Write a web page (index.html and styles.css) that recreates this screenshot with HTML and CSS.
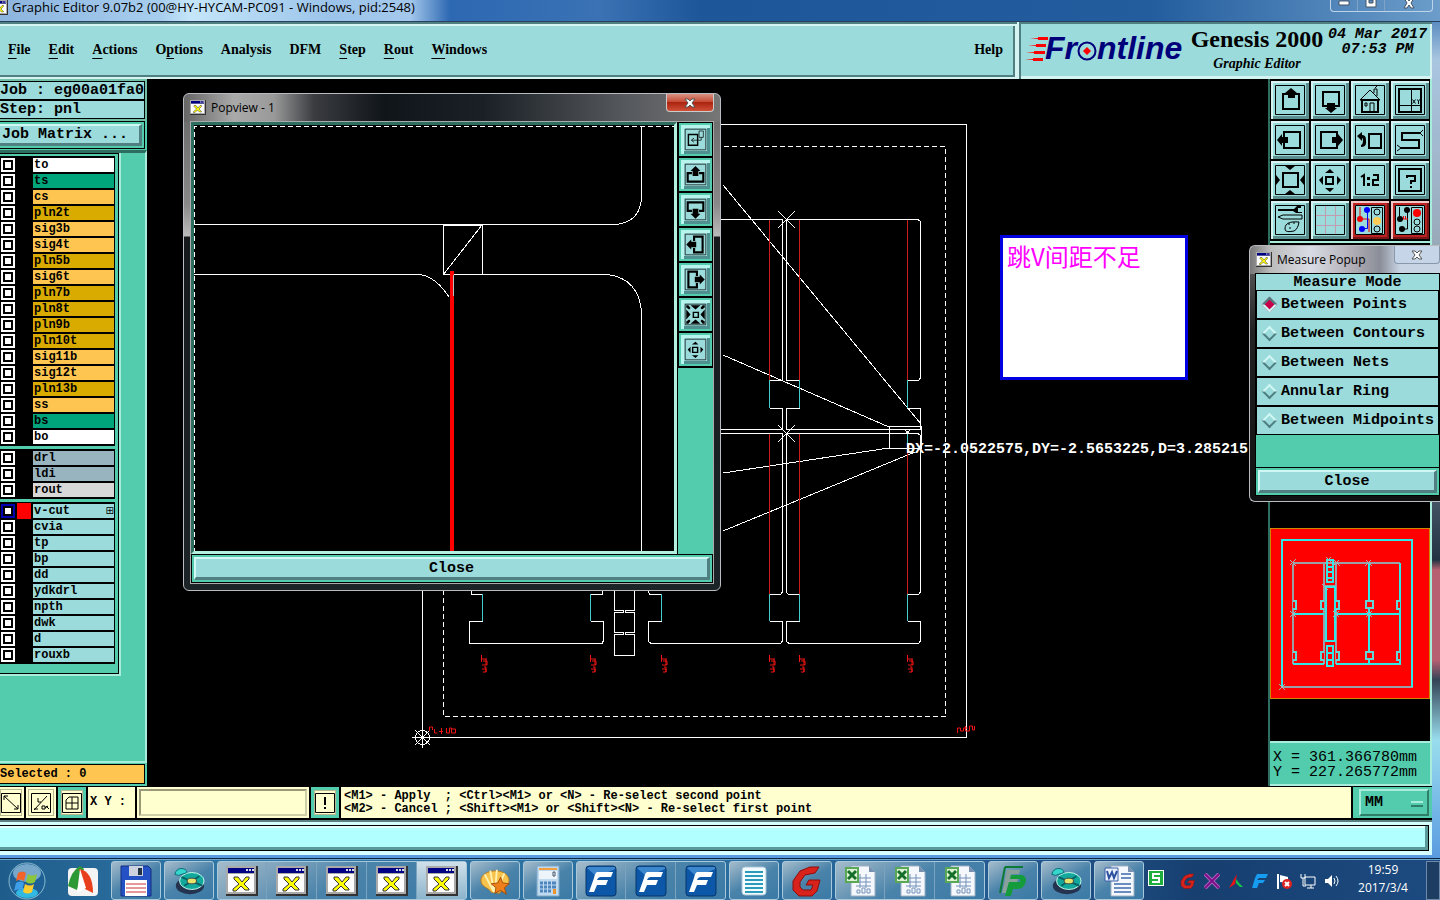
FILE: index.html
```html
<!DOCTYPE html>
<html lang="en">
<head>
    <meta charset="UTF-8">
    <meta name="viewport" content="width=device-width, initial-scale=1.0">
    <title>Graphic Editor 9.07b2</title>
    <link rel="stylesheet" href="styles.css">
</head>
<body>
    <!-- Shared icons -->
    <svg class="defs" width="0" height="0" aria-hidden="true">
        <symbol id="i-win" viewBox="0 0 32 30">
            <path d="M0 0h32v30H0z" fill="#333"/><path d="M0 0h30v28H0z" fill="#aaa"/>
            <path d="M2 2h26v5H2z" fill="#000084"/><path d="M2 8h26v18H2z" fill="#fff"/>
            <path d="M20 3h2v2h-2zM23 3h2v2h-2zM26 3h2v2h-2z" fill="#ddd"/>
            <path d="M8 11h4l4 5 4-5h3v2l-5 5 5 5v1h-4l-4-4-5 5H7v-2l6-5-5-5z" fill="#ff0" stroke="#333"/>
        </symbol>
        <symbol id="i-up" viewBox="0 0 38 38">
            <path class="fr" d="M4.500 4.500h29v29h-29z"/><path class="ln" d="M12 13h16v15H12z"/>
            <path d="M20 7l6 5h-2v5h-7v-5h-3z"/>
        </symbol>
        <symbol id="i-down" viewBox="0 0 38 38">
            <path class="fr" d="M4.500 4.500h29v29h-29z"/><path class="ln" d="M12 11h16v14H12z"/>
            <path d="M20 32l-6-5h2v-5h8v5h2z"/>
        </symbol>
        <symbol id="i-left" viewBox="0 0 38 38">
            <path class="fr" d="M4.500 4.500h29v29h-29z"/><path class="ln" d="M13 11h16v16H13z"/>
            <path d="M6 19l5-6v3h6v6h-6v3z"/>
        </symbol>
        <symbol id="i-right" viewBox="0 0 38 38">
            <path class="fr" d="M4.500 4.500h29v29h-29z"/><path class="ln" d="M10 11h16v16H10z"/>
            <path d="M32 19l-5-6v3h-6v6h6v3z"/>
        </symbol>
        <symbol id="i-in" viewBox="0 0 38 38">
            <path class="fr" d="M4.500 4.500h29v29h-29z"/><path class="ln" d="M12 12h15v14H12z"/>
            <path d="M14 5h10l-5 4zM14 33h10l-5-4zM5 14v10l4-5zM33 14v10l-4-5z"/>
        </symbol>
        <symbol id="i-out" viewBox="0 0 38 38">
            <path class="fr" d="M4.500 4.500h29v29h-29z"/><path class="ln" d="M15 16h7v7h-7z"/>
            <path d="M14 12h9l-4-4zM14 27h9l-4 4zM12 15v9l-4-5zM26 15v9l4-5z"/>
        </symbol>
        <!-- Heavier arrows for the small popview buttons -->
        <symbol id="p-up" viewBox="0 0 38 38">
            <path class="fr" d="M4.500 4.500h29v29h-29z"/><path class="ln3" d="M14 17H8v12h22V17h-6"/>
            <path d="M19 7l7 7h-3v7h-8v-7h-3z"/>
        </symbol>
        <symbol id="p-down" viewBox="0 0 38 38">
            <path class="fr" d="M4.500 4.500h29v29h-29z"/><path class="ln3" d="M14 21H8V9h22v12h-6"/>
            <path d="M19 32l7-7h-3v-7h-8v7h-3z"/>
        </symbol>
        <symbol id="p-left" viewBox="0 0 38 38">
            <path class="fr" d="M4.500 4.500h29v29h-29z"/><path class="ln3" d="M17 14V8h12v22H17v-6"/>
            <path d="M6 19l7-7v3h7v8h-7v3z"/>
        </symbol>
        <symbol id="p-right" viewBox="0 0 38 38">
            <path class="fr" d="M4.500 4.500h29v29h-29z"/><path class="ln3" d="M21 14V8H9v22h12v-6"/>
            <path d="M32 19l-7-7v3h-7v8h7v3z"/>
        </symbol>
        <symbol id="p-in" viewBox="0 0 38 38">
            <path class="fr" d="M4.500 4.500h29v29h-29z"/><path class="ln" d="M16 16h7v7h-7z"/>
            <path d="M12 6h14l-7 6zM12 32h14l-7-6zM6 12v14l6-7zM32 12v14l-6-7zM6 6h3l3 4-2 2-4-3zM32 6h-3l-3 4 2 2 4-3zM6 32h3l3-4-2-2-4 3zM32 32h-3l-3-4 2-2 4 3z"/>
        </symbol>
        <symbol id="t-shell" viewBox="0 0 34 30">
            <path d="M2 14C3 2 30 0 32 14c0 7-8 9-10 14l-9-1C11 22 2 22 2 14z" fill="#f7c34c" stroke="#b77a1c"/>
            <path d="M16 27L6 8M16 27L12 4M17 27l2-24M18 27l9-20" stroke="#fff0b0" stroke-width="2"/>
            <path d="M23 11l2 6 7 1-5 4 2 7-6-4-6 3 1-6-5-4 7-1z" fill="#ee7f1a" stroke="#a34b08"/>
        </symbol>
        <symbol id="t-disc" viewBox="0 0 34 30">
            <ellipse cx="18" cy="20" rx="15" ry="9" fill="#243450"/>
            <ellipse cx="20" cy="15" rx="13" ry="9" fill="#12a99c" stroke="#cfe" />
            <path d="M9 11l22 9M12 20l16-10" stroke="#085e62" stroke-width="2"/>
            <ellipse cx="20" cy="15" rx="5" ry="3" fill="#e7e46c" stroke="#444"/>
            <path d="M2 8C3 0 14 0 15 6L6 9z" fill="#35d7cc" stroke="#0a6b72"/>
        </symbol>
        <symbol id="t-f" viewBox="0 0 32 32">
            <rect x="1" y="1" width="30" height="30" rx="3" fill="#0c57a8" stroke="#073668"/>
            <path d="M2 3l10 9L30 4V2H4z" fill="#3d87cf"/>
            <path d="M12 7h16l-2 5H16q-3 0-4 3h11l-2 5h-9l-3 7H4l5-14q1-5 3-6z" fill="#fff"/>
        </symbol>
        <symbol id="t-xls" viewBox="0 0 32 32">
            <path d="M7 1h18l6 6v24H7z" fill="#f4f8fc" stroke="#9db0c4"/><path d="M25 1v6h6z" fill="#7890b0"/>
            <path d="M12 13h15M12 17h15M12 21h15M16 9v14M22 9v14M13 28v-3h3v3zm5 0v-5h3v5zm5 0v-4h3v4z" stroke="#7490b8" fill="none"/>
            <path d="M2 3h12v14H2z" fill="#dff3d4" stroke="#58a858" stroke-width="2"/>
            <path d="M4 6l8 8M12 6l-8 8" stroke="#166e2b" stroke-width="3"/>
        </symbol>
        <symbol id="t-g" viewBox="0 0 32 32">
            <path d="M28 2l-4 6-10 2-5 7v5l3 3h8l2-5h-7l3-5h11l-3 11-5 5H8l-6-6v-9l7-10 10-4z" fill="#d8231d" stroke="#8d0e0c"/>
        </symbol>
    </svg>

    <div class="app">
        <header class="titlebar">
            <svg class="title-icon"><use href="#i-win"/></svg>
            <span class="title-text">Graphic Editor 9.07b2 (00@HY-HYCAM-PC091 - Windows, pid:2548)</span>
            <div class="win-buttons">
                <button aria-label="Minimize"><svg width="12" height="6"><path d="M1 1h10v4H1z" fill="#fff" stroke="#456"/></svg></button>
                <button aria-label="Maximize"><svg width="12" height="8"><path d="M1 -3h10v10H1zM4 0h4v3H4z" fill="#fff" stroke="#456" fill-rule="evenodd"/></svg></button>
                <button class="wide" aria-label="Close"><svg width="12" height="9"><path d="M1 -2h3l2 3 2-3h3L8 3l3 5H8L6 5 4 8H1l3-5z" fill="#fff" stroke="#456"/></svg></button>
            </div>
        </header>

        <div class="topbar">
            <nav class="menu">
                <button><u>F</u>ile</button>
                <button><u>E</u>dit</button>
                <button><u>A</u>ctions</button>
                <button>O<u>p</u>tions</button>
                <button>Analysis</button>
                <button>DFM</button>
                <button><u>S</u>tep</button>
                <button><u>R</u>out</button>
                <button><u>W</u>indows</button>
                <button class="help">Help</button>
            </nav>
            <div class="brand">
                <div class="logo">
                    <svg width="26" height="26" viewBox="0 0 26 26"><path d="M23 1v3H13v-1L5 2.500 13 2V1zM21 8v3H11v-1L3 9.500 11 9V8zM20 15v3H9v-1l-8-.5L9 16v-1zM18 22v3H8v-1l-8-.5L8 23v-1z" fill="#f00"/></svg>
                    <span>Fr</span><svg width="20" height="24" viewBox="0 0 20 24"><circle cx="10" cy="14" r="8.500" fill="none" stroke="#00007b" stroke-width="2"/><path d="M10 10l4 4-4 4-4-4z" fill="#f00"/></svg><span>ntline</span>
                </div>
                <div class="product">
                    <strong>Genesis 2000</strong>
                    <em>Graphic Editor</em>
                </div>
                <div class="date">04 Mar 2017<br>07:53 PM</div>
            </div>
        </div>

        <div class="workspace">
            <aside class="sidebar">
                <div class="job">
                    <div>Job : eg00a01fa0</div>
                    <div>Step: pnl</div>
                </div>
                <div class="matrix"><button>Job Matrix ...</button></div>
                <div class="layer-area">
                    <div class="layers">
                        <div class="layer-group">
                            <label><input type="checkbox"><span class="white">to</span></label>
                            <label><input type="checkbox"><span class="mask">ts</span></label>
                            <label><input type="checkbox"><span class="signal">cs</span></label>
                            <label><input type="checkbox"><span class="plane">pln2t</span></label>
                            <label><input type="checkbox"><span class="signal">sig3b</span></label>
                            <label><input type="checkbox"><span class="signal">sig4t</span></label>
                            <label><input type="checkbox"><span class="plane">pln5b</span></label>
                            <label><input type="checkbox"><span class="signal">sig6t</span></label>
                            <label><input type="checkbox"><span class="plane">pln7b</span></label>
                            <label><input type="checkbox"><span class="plane">pln8t</span></label>
                            <label><input type="checkbox"><span class="plane">pln9b</span></label>
                            <label><input type="checkbox"><span class="plane">pln10t</span></label>
                            <label><input type="checkbox"><span class="signal">sig11b</span></label>
                            <label><input type="checkbox"><span class="signal">sig12t</span></label>
                            <label><input type="checkbox"><span class="plane">pln13b</span></label>
                            <label><input type="checkbox"><span class="signal">ss</span></label>
                            <label><input type="checkbox"><span class="mask">bs</span></label>
                            <label><input type="checkbox"><span class="white">bo</span></label>
                        </div>
                        <div class="layer-group">
                            <label><input type="checkbox"><span class="drill">drl</span></label>
                            <label><input type="checkbox"><span class="drill">ldi</span></label>
                            <label><input type="checkbox"><span class="rout">rout</span></label>
                        </div>
                        <div class="layer-group">
                            <label class="active"><input type="checkbox" checked><span>v-cut<i>⊞</i></span></label>
                            <label><input type="checkbox"><span>cvia</span></label>
                            <label><input type="checkbox"><span>tp</span></label>
                            <label><input type="checkbox"><span>bp</span></label>
                            <label><input type="checkbox"><span>dd</span></label>
                            <label><input type="checkbox"><span>ydkdrl</span></label>
                            <label><input type="checkbox"><span>npth</span></label>
                            <label><input type="checkbox"><span>dwk</span></label>
                            <label><input type="checkbox"><span>d</span></label>
                            <label><input type="checkbox"><span>rouxb</span></label>
                        </div>
                    </div>
                </div>
                <div class="selected">Selected : 0</div>
            </aside>

            <main class="canvas">
                <!-- Panel drawing -->
                <svg class="drawing" width="1121" height="707" viewBox="147 79 1121 707">
                    <g class="white-line">
                        <path d="M422.500 124.500h544v613h-544z"/>
                        <path class="dash" d="M443.500 146.500h502v570h-502z"/>
                        <path d="M700 219.500H782.500V380.500H769.500M769.500 408.500H782.500V429.500H700M786.500 429.500V408.500H799.500M799.500 380.500H786.500V219.500H918l2.500 2V378l-2 2.500H907.500M907.500 408.500H920.500V429.500H786.500"/>
                        <path d="M700 433.500H782.500V592l-2 2.500H769.500M769.500 621.500H782.500V641l-2 2.500H651l-2.500-2V621.500H661.500M661.500 594.500H650l-2-3"/>
                        <path d="M799.500 594.500H788.500l-2-2V433.500H918l2.500 2V592l-2 2.500H907.500M907.500 621.500H920.500V641l-2 2.500H789l-2.500-2V621.500H799.500"/>
                        <path d="M471 590l1 4.500h10M482.500 621.500H469.500V643.500H602l1.500-3V621.500H590.500M590.500 594.500h12v-4"/>
                        <path d="M614.500 590v20.500h9v2h-9v20h9v2h-9v21h20v-21h-9v-2h9v-20h-9v-2h9V590"/>
                        <path d="M778 211l17 17M795 211l-17 17M778 425l17 17M795 425l-17 17"/>
                        <path d="M723 185L921 424M723 355L889 427M889 448L723 473M915 452L723 531"/>
                        <path d="M889.500 426.500h32v22h-32zM905 430l5 4M910 430l-5 4"/>
                        <path d="M412 737.500h21M422.500 727v21M415 730l15 15M430 730l-15 15"/>
                        <circle cx="422.500" cy="737.500" r="7"/>
                    </g>
                    <path class="red-line" d="M769.500 220v160M799.500 220v160M907.500 220v160M769.500 434v160M799.500 434v160M907.500 434v160"/>
                    <path class="cyan-line" d="M769.500 380v28M799.500 380v28M907.500 380v28M907.500 434v10M482.500 594v27M590.500 594v27M661.500 594v27M769.500 594v27M799.500 594v27M907.500 594v27"/>
                    <g class="marks">
                        <path id="mark" d="M481.500 655v7M482 659h5M483 661h4v4h-5M486 659v6M484 667h2M482 669h4v3h-3M486 667v5"/>
                        <use href="#mark" x="109"/><use href="#mark" x="180"/><use href="#mark" x="288"/>
                        <use href="#mark" x="318"/><use href="#mark" x="426"/>
                        <path d="M429.500 731v-4h3v3M434.500 729v4h3M439 731.500h4M441.500 728v6M446.500 728v5h3v-5h2v5h4v-4h-4M957.500 733v-5h3v3h3v-3h4M965.500 726v5h4v-5h3v4h2v-4"/>
                    </g>
                    <text class="measure-text" x="906" y="453">DX=-2.0522575,DY=-2.5653225,D=3.285215</text>
                </svg>
                <div class="note">跳V间距不足</div>
            </main>

            <aside class="right-panel">
                <div class="tools">
                    <button aria-label="Pan up"><svg><use href="#i-up"/></svg></button>
                    <button aria-label="Pan down"><svg><use href="#i-down"/></svg></button>
                    <button aria-label="Home"><svg viewBox="0 0 38 38"><path class="fr" d="M4.500 4.500h29v29h-29zM9 19l10-10 10 10zM23 12V8h3v7M24 7l2-2M14 22h2v3h-2zM19 30v-8h4v8"/><path class="ln" d="M11 19h16v12H11z"/></svg></button>
                    <button aria-label="Pan to XY"><svg viewBox="0 0 38 38"><path class="fr" d="M4.500 4.500h29v29h-29zM20.500 8v23M8 24.500h22M21.500 18.500l3 4M24.500 18.500l-3 4M26.500 18.500l1 2 1-2M27.500 20v3"/><path class="ln" d="M8 8h22v23H8z"/></svg></button>
                    <button aria-label="Pan left"><svg><use href="#i-left"/></svg></button>
                    <button aria-label="Pan right"><svg><use href="#i-right"/></svg></button>
                    <button aria-label="Previous view"><svg viewBox="0 0 38 38"><path class="fr" d="M4.500 4.500h29v29h-29z"/><path class="ln" d="M18 13h12v14H18z"/><path d="M6 15l5-4v3q4 0 4 5v3q0 4-5 4v-2q2-1 2-4t-1-3v3z"/></svg></button>
                    <button aria-label="Serpentine"><svg viewBox="0 0 38 38"><path class="fr" d="M4.500 4.500h29v29h-29zM29 12l3-3M29 12l3 3M10 27l-4-3M10 27l-4 3"/><path class="ln" d="M29 12H11v7h17v8H9"/></svg></button>
                    <button aria-label="Zoom in"><svg><use href="#i-in"/></svg></button>
                    <button aria-label="Zoom out"><svg><use href="#i-out"/></svg></button>
                    <button aria-label="Scale 1:2"><svg viewBox="0 0 38 38"><path class="fr" d="M4.500 4.500h29v29h-29z"/><path class="ln" d="M10 16l3-2v11M22 14h5v5h-5v5h6"/><path d="M16 16h3v3h-3zM16 22h3v3h-3z"/></svg></button>
                    <button aria-label="Help"><svg viewBox="0 0 38 38"><path class="fr" d="M4.500 4.500h29v29h-29z"/><path class="ln" d="M8 8h22v22H8zM16 17v-2h8v5h-4v3M20 25v2"/></svg></button>
                    <button aria-label="Drawing tools"><svg viewBox="0 0 38 38"><path class="fr" d="M4.500 4.500h29v29h-29zM7 16l5-2h19v4H12zM15 24q3-4 13-3-1 7-5 9-9 2-9-2 0-3 1-4zM17 23h2M22 22h2M18 27h2"/><path d="M7 8h16l3-3h4v2h-3v4h4v1h-6l-3-2H7z"/></svg></button>
                    <button aria-label="Grid"><svg viewBox="0 0 38 38"><path class="fr" d="M4.500 4.500h29v29h-29z"/><path d="M14.500 5v28M24.500 5v28M5 14.500h28M5 24.500h28" stroke="#c39bb0"/></svg></button>
                    <button class="alert" aria-label="Net on"><svg viewBox="0 0 38 38"><path class="fr" d="M4.500 4.500h29v29h-29zM20.500 6.500h11v26h-11z"/><path d="M9 6v12h9v13" stroke="#e00" fill="none"/><path d="M16.500 8v19.500h-6" stroke="#00f" fill="none"/><circle cx="9" cy="18" r="3" fill="#e00"/><circle cx="16" cy="9" r="3" fill="#00f"/><circle cx="11" cy="28" r="3" fill="#00f"/><circle class="fr" cx="26" cy="11" r="3"/><circle cx="26" cy="20" r="4" fill="#fc5"/><circle class="fr" cx="26" cy="28" r="3"/></svg></button>
                    <button class="alert" aria-label="Net off"><svg viewBox="0 0 38 38"><path class="fr" d="M4.500 4.500h29v29h-29zM20.500 6.500h11v26h-11zM8.500 6v12M16.500 9v19h-6"/><path d="M11 18h6M12.500 15v3M14.500 15v3" stroke="#e00"/><circle cx="9" cy="18" r="3"/><circle cx="16" cy="9" r="3"/><circle cx="11" cy="28" r="3"/><circle cx="26" cy="12" r="4" fill="#f00"/><circle class="fr" cx="26" cy="21" r="3"/><circle class="fr" cx="26" cy="28" r="3"/></svg></button>
                </div>
                <div class="overview">
                    <svg class="map" viewBox="0 0 160 171">
                        <path d="M0 0h160v171H0z" fill="#f00"/>
                        <path class="map-gray" d="M11 160h133M22 35v102M22 34h109M54 34v103M66 34v103M54 58h12"/>
                        <path class="map-cyan" d="M11 160V11h132v149M22 86h32M66 86h66M99 34v103M131 34v103H66M54 137H22M56 59h9v54h-9zM57 31h6v23h-6zM57 118h6v21h-6zM57 38h5M57 44h5M57 50h5M57 126h5M57 133h5"/>
                        <path class="map-notch" d="M22 73h3v8h-3M22 125h3v8h-3M54 73h-3v8h3M54 125h-3v8h3M66 73h3v8h-3M66 125h3v8h-3M96 73h7v7h-7zM96 125h7v7h-7zM131 73h-3v8h3M131 125h-3v8h3"/>
                        <path d="M19 31l6 6M25 31l-6 6M63 31l6 6M69 31l-6 6M96 31l6 6M102 31l-6 6M19 83l6 6M25 83l-6 6M63 83l6 6M69 83l-6 6M96 83l6 6M102 83l-6 6M8 157l6 6M14 157l-6 6M55 28l6 6M61 28l-6 6M52 56l6 6" stroke="#a9b5b5"/>
                    </svg>
                </div>
                <div class="coords">X = 361.366780mm<br>Y = 227.265772mm</div>
            </aside>
        </div>

        <div class="input-row">
            <button class="cream first" aria-label="Measure"><svg viewBox="0 0 20 20"><path class="fr" d="M.5 .5h19v19H.5zM3 3l14 13M3 7V3h4M17 12v4h-4"/></svg></button>
            <button class="cream" aria-label="Angle"><svg viewBox="0 0 20 20"><path class="fr" d="M.5 .5h19v19H.5zM3 17L16 3M3 16h4M7 5v4h3M11 13h3v3h-3zM14 15l3-2M15 13l3 3"/></svg></button>
            <button class="cream teal" aria-label="Snap grid"><svg viewBox="0 0 20 20"><path class="fr" d="M.5 .5h19v19H.5zM4 7l3-3h9v12H4zM10 4v12M4 10h12"/></svg></button>
            <label class="xy-label" for="xy">X Y :</label>
            <div class="xy-field"><input type="text" id="xy"></div>
            <button class="cream teal" aria-label="Alerts"><svg viewBox="0 0 20 20"><path class="fr" d="M.5 .5h19v19H.5z"/><path d="M9 4h2v8H9zM9 14h2v2H9z"/></svg></button>
            <div class="message">&lt;M1&gt; - Apply &nbsp;; &lt;Ctrl&gt;&lt;M1&gt; or &lt;N&gt; - Re-select second point<br>&lt;M2&gt; - Cancel ; &lt;Shift&gt;&lt;M1&gt; or &lt;Shift&gt;&lt;N&gt; - Re-select first point</div>
            <div class="units">
                <select aria-label="Units"><option>MM</option><option>INCH</option></select>
            </div>
        </div>
        <div class="status"><div></div></div>
    </div>

    <section class="window popview">
        <div class="window-title">
            <svg class="title-icon"><use href="#i-win"/></svg>
            <span>Popview - 1</span>
            <button class="close-x" aria-label="Close window"><svg width="12" height="10"><path d="M1 1h3l2 2 2-2h3L8 5l3 4H8L6 7 4 9H1l3-4z" fill="#fff" stroke="#555"/></svg></button>
        </div>
        <div class="popview-body">
            <div class="popview-main">
                <div class="popview-canvas">
                    <svg width="483" height="426" viewBox="194 125 483 426">
                        <g class="white-line">
                            <path class="dash" d="M194.500 553V126.500H677"/>
                            <path d="M194 224.500H616Q641 222 641.500 196V127"/>
                            <path d="M194 274.500H420Q436 277 449 297M482 274.500H608Q639 279 641.500 312V553"/>
                            <path d="M443 225.500h39.500v49H443zM443 275l39-50"/>
                        </g>
                        <path d="M452 271v282" stroke="#f00" stroke-width="4"/>
                        <path d="M453.500 275v21" stroke="#bbb"/>
                    </svg>
                </div>
                <div class="popview-tools">
                    <button aria-label="Fit view"><svg viewBox="0 0 38 38"><path class="fr" d="M4.500 4.500h29v29h-29zM24 7h6v9h-6zM27 16v4H14M17 17l-4 3 4 3"/><path class="ln" d="M9 12h13v15H9z"/></svg></button>
                    <button aria-label="Up"><svg><use href="#p-up"/></svg></button>
                    <button aria-label="Down"><svg><use href="#p-down"/></svg></button>
                    <button aria-label="Left"><svg><use href="#p-left"/></svg></button>
                    <button aria-label="Right"><svg><use href="#p-right"/></svg></button>
                    <button aria-label="Zoom in"><svg><use href="#p-in"/></svg></button>
                    <button aria-label="Zoom out"><svg><use href="#i-out"/></svg></button>
                </div>
            </div>
            <div class="close-row"><button>Close</button></div>
        </div>
    </section>

    <section class="window measure">
        <div class="window-title">
            <svg class="title-icon"><use href="#i-win"/></svg>
            <span>Measure Popup</span>
            <button class="close-x" aria-label="Close window"><svg width="12" height="10"><path d="M1 1h3l2 2 2-2h3L8 5l3 4H8L6 7 4 9H1l3-4z" fill="#fff" stroke="#555"/></svg></button>
        </div>
        <div class="measure-body">
            <h3>Measure Mode</h3>
            <label><input type="radio" name="mode" checked>Between Points</label>
            <label><input type="radio" name="mode">Between Contours</label>
            <label><input type="radio" name="mode">Between Nets</label>
            <label><input type="radio" name="mode">Annular Ring</label>
            <label><input type="radio" name="mode">Between Midpoints</label>
            <div class="close-row"><button>Close</button></div>
        </div>
    </section>

    <footer class="taskbar">
        <button class="start" aria-label="Start"><svg viewBox="0 0 38 38">
            <circle cx="19" cy="19" r="18" fill="#1e5f96" stroke="#8bc"/><ellipse cx="19" cy="11" rx="14" ry="9" fill="#9cc6df" opacity=".7"/><ellipse cx="19" cy="31" rx="11" ry="5" fill="#35d0f5" opacity=".8"/>
            <path d="M10 11q4-3 8 0l-2 8q-4-3-8 0z" fill="#f0632a"/><path d="M20 12q4 3 9 0l-2 8q-5 3-9 0z" fill="#8cc63c"/><path d="M8 21q4-3 8 0l-2 8q-4-3-8 0z" fill="#3f9ee8"/><path d="M17 22q5 3 9 0l-2 8q-4 3-9 0z" fill="#fccb2e"/>
        </svg></button>
        <button class="pinned" aria-label="Umbrella"><svg viewBox="0 0 32 32"><rect x="1" y="3" width="30" height="28" rx="4" fill="#f4f4f4"/><path d="M1 21Q4 6 13 1l4 3-7 21z" fill="#2c9a34"/><path d="M12 4q14 2 14 24l-8-4z" fill="#e8401c"/><path d="M13 4l6 19-9 5z" fill="#fff"/></svg></button>
        <div class="task-group"><button aria-label="Floppy"><svg viewBox="0 0 32 32"><path d="M1 1h27l3 3v27H1z" fill="#2452c4" stroke="#142e80"/><path d="M9 1h14v10H9z" fill="#ccd3de"/><path d="M18 3h4v7h-4z" fill="#234"/><path d="M5 15h22v16H5z" fill="#fff"/><path d="M6 19h20M6 23h20M6 27h20" stroke="#c33"/></svg></button></div>
        <div class="task-group"><button aria-label="Disc"><svg><use href="#t-disc"/></svg></button></div>
        <div class="task-group">
            <button aria-label="Genesis 1"><svg><use href="#i-win"/></svg></button>
            <button aria-label="Genesis 2"><svg><use href="#i-win"/></svg></button>
            <button aria-label="Genesis 3"><svg><use href="#i-win"/></svg></button>
            <button aria-label="Genesis 4"><svg><use href="#i-win"/></svg></button>
            <button class="current" aria-label="Genesis 5"><svg><use href="#i-win"/></svg></button>
        </div>
        <div class="task-group"><button aria-label="Shell"><svg><use href="#t-shell"/></svg></button></div>
        <div class="task-group"><button aria-label="Calculator"><svg viewBox="0 0 32 32"><path d="M5 1h22v30H5z" fill="#bfd9ee" stroke="#7fa6c8"/><path d="M7 3h18v2H7z" fill="#f0a040"/><path d="M7 6h18v8H7z" fill="#eef5fa"/><path d="M21 7h2v4h-2z" stroke="#456" fill="none"/><path d="M8 18h3m1 0h3m1 0h3m1 0h4M8 22h3m1 0h3m1 0h3m1 0h4M8 26h3m1 0h3m1 0h3" stroke="#4d86bd" stroke-width="3"/><path d="M21 24h3v5h-3z" fill="#f0922a"/></svg></button></div>
        <div class="task-group">
            <button aria-label="FTP 1"><svg><use href="#t-f"/></svg></button>
            <button aria-label="FTP 2"><svg><use href="#t-f"/></svg></button>
            <button aria-label="FTP 3"><svg><use href="#t-f"/></svg></button>
        </div>
        <div class="task-group"><button aria-label="Notes"><svg viewBox="0 0 32 32"><rect x="4" y="2" width="24" height="28" rx="3" fill="#f3fbff" stroke="#a5c4d8"/><path d="M7 7h18M7 11h18M7 15h18M7 19h18M7 23h18M7 27h18" stroke="#2a9bb8" stroke-width="2"/></svg></button></div>
        <div class="task-group"><button aria-label="G tool"><svg><use href="#t-g"/></svg></button></div>
        <div class="task-group">
            <button aria-label="Sheet 1"><svg><use href="#t-xls"/></svg></button>
            <button aria-label="Sheet 2"><svg><use href="#t-xls"/></svg></button>
            <button aria-label="Sheet 3"><svg><use href="#t-xls"/></svg></button>
        </div>
        <div class="task-group"><button aria-label="P tool"><svg viewBox="0 0 32 32"><path d="M8 2h18M8 2L3 28" stroke="#0c7a35" stroke-width="2" fill="none"/><path d="M10 5h13l-1 4h-8l-1 5h8l-1 4h-8l-3 10H5z" fill="#8aa09a"/><path d="M14 10h11q6 2 3 9-2 5-8 5h-4l-2 7H8l4-14h11v-3H13z" fill="#149c3c"/></svg></button></div>
        <div class="task-group"><button aria-label="Disc 2"><svg><use href="#t-disc"/></svg></button></div>
        <div class="task-group"><button aria-label="Document"><svg viewBox="0 0 32 32"><path d="M8 1h17l6 6v24H8z" fill="#f4f8fc" stroke="#9db0c4"/><path d="M25 1v6h6z" fill="#7890b0"/><path d="M18 9h10M18 13h10M11 19h17M11 23h17M11 27h17" stroke="#6b8cc0" stroke-width="2"/><path d="M2 3h13v13H2z" fill="#eaf1fb" stroke="#3a5ea8"/><path d="M4 6l2 7 3-6 2 6 3-7" stroke="#2a4f9e" stroke-width="2" fill="none"/></svg></button></div>
        <div class="tray">
            <svg class="ime" viewBox="0 0 16 16"><path d="M0 0h16v16H0z" fill="#fff"/><path d="M1 1h14v14H1z" fill="#1fae3c"/><path d="M12 4H5v4h6v4H4" fill="none" stroke="#fff" stroke-width="2"/></svg>
            <svg><use href="#t-g"/></svg>
            <svg viewBox="0 0 16 16"><path d="M1 1l14 14M15 1L1 15" stroke="#a6b" stroke-width="4"/><path d="M1 1l14 14M15 1L1 15" stroke="#80108a" stroke-width="2"/></svg>
            <svg viewBox="0 0 16 16"><path d="M9 1L1 15l6-4z" fill="#e11"/><path d="M8 6l3 4 4 4h-3l-4-4z" fill="#1c4"/></svg>
            <svg viewBox="0 0 16 16"><path d="M5 1h11l-2 4H7L5 7h8l-2 3H7l-2 5H0l3-10z" fill="#169cf0"/></svg>
            <svg viewBox="0 0 16 16"><path d="M2 1v15" stroke="#fff" stroke-width="2"/><path d="M4 2l8 2v6l-8-1z" fill="#fff"/><circle cx="11" cy="11" r="5" fill="#d22"/><path d="M9 9l4 4M13 9l-4 4" stroke="#fff" stroke-width="2"/></svg>
            <svg viewBox="0 0 16 16"><path d="M5 4h10v8H5zM7 15h7M11 12v3M1 1v4h4V1M3 5v8h3" fill="none" stroke="#fff" stroke-width="1"/></svg>
            <svg viewBox="0 0 16 16"><path d="M1 6h3l4-4v12l-4-4H1z" fill="#fff"/><path d="M10 5q2 3 0 6M12 3q4 5 0 10" fill="none" stroke="#fff"/></svg>
        </div>
        <div class="clock">19:59<br>2017/3/4</div>
        <button class="show-desktop" aria-label="Show desktop"></button>
    </footer>
</body>
</html>
```
FILE: styles.css
```css
* {
    box-sizing: border-box;
}

body {
    margin: 0;
    position: relative;
    display: flex;
    flex-direction: column;
    min-height: 100vh;
    overflow: hidden;
    background: #000;
    font-family: "Liberation Mono", monospace;
    font-size: 15px;
    font-weight: bold;
    color: #000;
}

button {
    font: inherit;
    color: inherit;
    padding: 0;
    border: none;
    background: none;
    cursor: pointer;
}

svg {
    display: block;
}

.defs {
    position: absolute;
}

/* Icon strokes */
.fr {
    fill: none;
    stroke: #000;
}

.ln, .ln3 {
    fill: none;
    stroke: #000;
    stroke-width: 2;
}

.ln3 {
    stroke-width: 3;
}

.app {
    flex: 1;
    display: flex;
    flex-direction: column;
    padding: 0 8px 3px 0;
    background: linear-gradient(#2f6bb0, #a9c6e0 60px, #9ab 240px, #456 500px, #234 560px, #b66072 570px, #b66072 660px, #345 680px, #9de 740px, #5a9be0);
}

/* Title bar */
.titlebar {
    height: 22px;
    margin-right: -8px;
    display: flex;
    background: linear-gradient(90deg, #8cb4de 0, #a7cdee 160px, #c5e6fa 190px, #9cc4ea 330px, #a4c8ec 410px, #2d68b2 450px, #3a72b4 600px, #1e5799 700px, #235d9e 1150px, #6c9dca 1440px);
    border-bottom: 1px solid #26405e;
    font-family: "Open Sans", sans-serif;
    font-size: 13px;
    font-weight: normal;
}

.title-icon {
    width: 16px;
    height: 15px;
}

.titlebar .title-icon {
    margin-left: -8px;
}

.title-text {
    margin-left: 4px;
    line-height: 14px;
}

.win-buttons {
    display: flex;
    height: 12px;
    margin-left: auto;
    margin-right: 7px;
    border: 1px solid #bcd4ea;
    border-top: none;
    border-radius: 0 0 4px 4px;
}

.win-buttons button {
    width: 27px;
    display: flex;
    justify-content: center;
    border-right: 1px solid #7fa3c6;
}

.win-buttons .wide {
    width: 47px;
    border: none;
}

/* Menu and logo */
.topbar {
    height: 57px;
    display: flex;
    gap: 2px;
    background: #d5f3f1;
    font-family: "Liberation Serif", serif;
    font-size: 14px;
}

.menu {
    flex: 1;
    display: flex;
    align-items: center;
    gap: 18px;
    padding: 0 14px 4px 8px;
    background: #9bdbdb;
    border-top: 2px solid #4f7f80;
    box-shadow: inset 0 2px #d5f3f1, inset -2px -2px #d5f3f1, inset -4px -4px #4f7f80;
}

.menu u {
    text-underline-offset: 4px;
}

.menu .help {
    margin-left: auto;
}

.brand {
    width: 413px;
    display: flex;
    padding: 0 2px 0 4px;
    background: #9bdbdb;
    border: solid #4f7f80;
    border-width: 2px 0 0 2px;
    box-shadow: inset -2px -3px #d5f3f1;
}

.logo {
    display: flex;
    align-items: center;
    width: 161px;
    padding-bottom: 6px;
    font-family: "Liberation Sans", sans-serif;
    font-style: italic;
    font-size: 32px;
    color: #00007b;
}

.logo svg {
    flex: none;
}

.logo svg:first-child {
    margin-right: -6px;
}

.product {
    display: flex;
    flex-direction: column;
    align-items: center;
    width: 142px;
    white-space: nowrap;
}

.product strong {
    font-size: 24px;
    line-height: 30px;
}

.product em {
    line-height: 20px;
}

.date {
    font-family: "Liberation Mono", monospace;
    font-size: 15px;
    font-style: italic;
    line-height: 15px;
    text-align: center;
    padding-top: 3px;
    white-space: nowrap;
}

.workspace {
    flex: 1;
    display: flex;
    background: #000;
}

/* Left sidebar */
.sidebar {
    width: 147px;
    display: flex;
    flex-direction: column;
    background: #52ccac;
    white-space: nowrap;
}

.job {
    padding: 2px 2px 2px 0;
    background: #72bfa9;
}

.job div {
    height: 19px;
    line-height: 17px;
    background: #9bdbdb;
    border: 1px solid #000;
    border-left: none;
}

.matrix {
    height: 28px;
    margin-right: 2px;
    padding: 2px 2px 2px 0;
    border: 1px solid #000;
    border-left: none;
}

.matrix button {
    width: 100%;
    height: 22px;
    padding-left: 2px;
    text-align: left;
    background: #9bdbdb;
    border: solid;
    border-width: 2px 3px 3px 0;
    border-color: #d0f7f3 #4f7f80 #4f7f80;
}

.layer-area {
    flex: 1;
    margin-top: 1px;
    border-top: 3px solid #2e6e60;
    border-right: 2px solid #a8ecdc;
    border-bottom: 2px solid #a8ecdc;
}

.layers {
    width: 121px;
    padding: 3px 4px 10px 0;
    border-right: 2px solid #a8ecdc;
    border-bottom: 2px solid #a8ecdc;
    box-shadow: inset -1px -1px #000, inset 0 1px #000;
    display: flex;
    flex-direction: column;
    gap: 3px;
}

.layer-group {
    background: #000;
    padding: 1px 0;
}

.layer-group label {
    height: 16px;
    display: flex;
    align-items: center;
    padding: 1px;
    font-size: 12px;
}

.layer-group input {
    appearance: none;
    width: 14px;
    height: 14px;
    margin: 0 18px 0 0;
    background: #fff;
    border: 2px solid #fff;
    box-shadow: inset 0 0 0 2px #000;
}

.layer-group span {
    flex: 1;
    height: 14px;
    line-height: 14px;
    padding-left: 1px;
    background: #9bdbdb;
}

.layer-group .active {
    background: linear-gradient(90deg, #000 17px, #f00 17px, #f00 31px, #000 31px);
}

.layer-group .active input {
    border-color: #0000b0;
}

.active i {
    float: right;
    font: 10px/14px "DejaVu Sans", sans-serif;
}

.layer-group .white { background: #fff; }
.layer-group .mask { background: #00a57c; }
.layer-group .signal { background: #fec650; }
.layer-group .plane { background: #d9aa00; }
.layer-group .drill { background: #98b4bf; }
.layer-group .rout { background: #d8d8d8; }

.selected {
    height: 20px;
    margin: 1px 2px 2px 0;
    background: #fec650;
    border: 1px solid #000;
    border-left: none;
    font-size: 12px;
    line-height: 18px;
}

/* Drawing area */
.canvas {
    flex: 1;
    min-width: 0;
    position: relative;
    overflow: hidden;
}

.drawing {
    position: absolute;
    top: 0;
    left: 0;
}

.white-line {
    fill: none;
    stroke: #fff;
    shape-rendering: crispEdges;
}

.dash {
    stroke-dasharray: 5 3;
}

.red-line {
    stroke: #cc1c1c;
    shape-rendering: crispEdges;
}

.cyan-line {
    stroke: #4cc;
    shape-rendering: crispEdges;
}

.marks {
    fill: none;
    stroke: #f01414;
}

.measure-text {
    fill: #fff;
    font-size: 15px;
}

.note {
    position: absolute;
    top: 156px;
    left: 853px;
    width: 188px;
    height: 145px;
    padding: 0 4px;
    background: #fff;
    border: 3px solid #0000e0;
    color: #f0f;
    font-family: "Noto Sans CJK SC", sans-serif;
    font-size: 24px;
    font-weight: normal;
    line-height: 36px;
}

/* Right panel */
.right-panel {
    width: 164px;
    display: flex;
    flex-direction: column;
    border-left: 2px solid #2e6e60;
    border-right: 2px solid #a8ecdc;
}

.tools {
    display: grid;
    grid-template-columns: repeat(4, 38px);
    gap: 2px;
    padding: 2px 0 2px 1px;
    border-bottom: 2px solid #a8ecdc;
}

.tools button {
    height: 38px;
    background: #9bdbdb;
    box-shadow: inset 2px 2px #d5f3f1, inset -3px -3px #5b8f90;
}

.tools svg {
    width: 38px;
    height: 38px;
}

.tools .alert {
    background: linear-gradient(#9bdbdb, #9bdbdb) 4px 4px / 30px 30px no-repeat #b22;
    box-shadow: inset 2px 2px #f3c6c6, inset -2px -2px #7a1515;
}

.overview {
    flex: 1;
    display: flex;
    align-items: flex-end;
    padding-bottom: 42px;
    border-bottom: 2px solid #a8ecdc;
}

.map {
    width: 100%;
    border: 1px solid #c80;
}

.map path {
    shape-rendering: crispEdges;
}

.map-gray, .map-cyan, .map-notch {
    fill: none;
    stroke-width: 2;
}

.map-gray { stroke: #99a0a8; }
.map-cyan { stroke: #30e8e8; }

.map-notch {
    fill: #f00;
    stroke: #60d8d8;
}

.coords {
    height: 43px;
    padding: 7px 3px 0;
    background: #52ccac;
    border-bottom: 2px solid #a8ecdc;
    line-height: 15px;
    font-weight: normal;
    white-space: nowrap;
}

/* Input row */
.input-row {
    height: 34px;
    display: flex;
    gap: 2px;
    padding: 1px 0 2px;
    background: #000;
    font-size: 12px;
}

.cream {
    width: 30px;
    display: flex;
    align-items: center;
    justify-content: center;
    background: #ffffd0;
    border: 2px solid #ffffd0;
    box-shadow: inset 0 0 0 1px #b8b890;
}

.cream svg {
    width: 20px;
    height: 20px;
}

.first {
    width: 24px;
    border-left: none;
}

.teal {
    width: 28px;
    border: 3px solid #52ccac;
}

.xy-label {
    width: 47px;
    padding-left: 2px;
    background: #ffffd0;
    line-height: 31px;
    white-space: nowrap;
}

.xy-field {
    width: 172px;
    padding: 2px;
    background: #ffffd0;
}

.xy-field input {
    width: 100%;
    height: 100%;
    padding: 0 4px;
    background: #ffffd0;
    border: 2px solid;
    border-color: #9a9a78 #d0d0a8 #d0d0a8 #9a9a78;
    font: inherit;
}

.message {
    flex: 1;
    padding: 3px;
    background: #ffffd0;
    line-height: 13px;
    white-space: nowrap;
}

.units {
    width: 79px;
    padding: 2px 3px 2px 6px;
    background: #52ccac;
}

.units select {
    appearance: none;
    width: 100%;
    height: 100%;
    padding: 0 4px;
    border: 2px solid;
    border-color: #a8ecdc #2e7e68 #2e7e68 #a8ecdc;
    background: linear-gradient(#2e7e68, #2e7e68) 50px 14px / 12px 2px no-repeat, linear-gradient(#a8ecdc, #a8ecdc) 50px 10px / 12px 2px no-repeat #52ccac;
    font: inherit;
    font-size: 15px;
    color: #000;
}

.status {
    height: 35px;
    padding: 3px 3px 4px 0;
    background: #d5ffff;
    border-top: 2px solid #5a8080;
}

.status div {
    height: 26px;
    background: #b2ffff;
    border: 1px solid #000;
    border-left: none;
    box-shadow: inset -3px -3px #5a9a9a, inset 0 2px #e5ffff;
}

/* Floating windows */
.window {
    position: absolute;
    border: 1px solid #b8bcc0;
    border-radius: 6px;
    background: #555;
    padding: 0 6px 6px;
    display: flex;
    flex-direction: column;
}

.window-title {
    height: 27px;
    display: flex;
    align-items: center;
    gap: 5px;
    font-family: "Open Sans", sans-serif;
    font-size: 12px;
    font-weight: normal;
}

.close-x {
    align-self: flex-start;
    width: 48px;
    height: 18px;
    margin-left: auto;
    display: flex;
    align-items: center;
    justify-content: center;
    border: 1px solid #ccc;
    border-top: none;
    border-radius: 0 0 4px 4px;
}

.popview {
    top: 93px;
    left: 183px;
    width: 538px;
    background: linear-gradient(90deg, #666, #aaa 50px, #999 90px, #3a3c40 130px, #10151a 200px, #1a2026 300px, #55585c 440px, #777 538px) top / 100% 28px no-repeat, linear-gradient(#666, #888 110px, #bbb 142px, #15191c 143px, #1c2428);
}

.popview .close-x {
    background: linear-gradient(#d99183, #c5452f 50%, #ab2410 50%, #d05038);
}

.popview-body {
    background: #000;
    border: 1px solid #aaa;
}

.popview-main {
    display: flex;
    background: #52ccac;
}

.popview-canvas {
    flex: 1;
    background: #000;
    overflow: hidden;
    border: solid;
    border-width: 3px;
    border-color: #2e6e60 #b4f0e0 #b4f0e0 #2e6e60;
}

.popview-tools {
    width: 36px;
    padding: 1px;
    display: flex;
    flex-direction: column;
    gap: 2px;
    background: linear-gradient(#000, #000) 0 0 / 100% 246px no-repeat;
    border-left: 1px solid #000;
}

.popview-tools button {
    width: 33px;
    height: 33px;
    display: flex;
    align-items: center;
    justify-content: center;
    background: #9bdbdb;
    border: 2px solid #52ccac;
    box-shadow: inset 3px 3px #b8f4ee, inset -3px -3px #4f9090;
}

.popview-tools svg {
    width: 27px;
    height: 27px;
}

.close-row {
    padding: 2px;
    background: #52ccac;
    border: 1px solid #000;
}

.close-row button {
    display: block;
    width: 100%;
    height: 23px;
    background: #9bdbdb;
    border: solid;
    border-width: 2px 3px 3px 2px;
    border-color: #d0f7f3 #4f7f80 #4f7f80 #d0f7f3;
}

.measure {
    top: 245px;
    right: 0;
    width: 191px;
    padding: 0 0 5px 5px;
    border-right: none;
    border-radius: 6px 0 0 6px;
    background: linear-gradient(90deg, #777, #bbb 20px, #d8dce4 60px, #b4b0b8 100px, #8a8e98 130px, #c8d4e4 150px) top / 100% 28px no-repeat, linear-gradient(#666, #222 85px, #111);
}

.measure .title-icon {
    margin-left: 1px;
}

.measure .close-x {
    width: 46px;
    border-color: #8a97a8;
    background: #c6d6e8;
}

.measure-body {
    background: #52ccac;
    border: 1px solid #000;
}

.measure h3 {
    height: 16px;
    margin: 0;
    background: #9bdbdb;
    font-size: 15px;
    line-height: 17px;
    text-align: center;
}

.measure label {
    height: 29px;
    display: flex;
    align-items: center;
    gap: 5px;
    padding-left: 6px;
    background: #9bdbdb;
    border: 1px solid #000;
    white-space: nowrap;
}

.measure input {
    appearance: none;
    flex: none;
    width: 11px;
    height: 11px;
    margin: 0 1px;
    transform: rotate(45deg);
    border: 2px solid;
    border-color: #d0f7f3 #4f7f80 #4f7f80 #d0f7f3;
}

.measure input:checked {
    background: #c8004c;
    border-color: #4f7f80 #d0f7f3 #d0f7f3 #4f7f80;
}

.measure .close-row {
    margin-top: 32px;
    border-width: 1px 0 0;
}

/* Taskbar */
.taskbar {
    height: 42px;
    display: flex;
    gap: 3px;
    padding: 2px 0 0;
    background: linear-gradient(90deg, #1e5c8c, #2f76a4 200px, #2b6f9f 700px, #235a90 1000px, #173f70 1200px, #1c4a80);
    border-top: 1px solid #0a2540;
    box-shadow: inset 0 1px #6ea5cc;
}

.taskbar svg {
    width: 32px;
    height: 32px;
}

.start {
    width: 54px;
}

.taskbar .start svg {
    width: 38px;
    height: 38px;
    margin: 0 auto;
}

.pinned {
    width: 51px;
    padding-left: 10px;
}

.task-group {
    display: flex;
    border: 1px solid #a8c8dc;
    border-radius: 3px;
    background: linear-gradient(150deg, #a5bccb, #4a83aa 50%, #3a7aa6);
}

.task-group button {
    width: 48px;
    display: flex;
    align-items: center;
    justify-content: center;
}

.task-group button + button {
    width: 50px;
    border-left: 1px solid #7ba3bd;
}

.task-group .current {
    background: linear-gradient(#d0e0ea, #8cb4cc);
}

.tray {
    display: flex;
    align-items: center;
    gap: 8px;
    margin-left: auto;
}

.taskbar .tray svg {
    width: 16px;
    height: 16px;
}

.tray .ime {
    margin-right: 8px;
    margin-bottom: 6px;
}

.clock {
    width: 80px;
    color: #fff;
    font-family: "Open Sans", sans-serif;
    font-size: 12px;
    font-weight: normal;
    line-height: 18px;
    text-align: center;
}

.show-desktop {
    width: 14px;
    border: 1px solid #6d8aa8;
    background: #1d3d62;
}
```
